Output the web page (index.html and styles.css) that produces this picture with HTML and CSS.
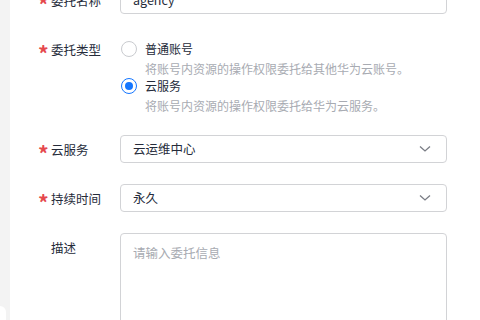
FILE: index.html
```html
<!DOCTYPE html>
<html lang="zh-CN">
<head>
    <meta charset="UTF-8">
    <meta name="viewport" content="width=device-width, initial-scale=1.0">
    <title>创建委托</title>
    <link rel="stylesheet" href="styles.css">
</head>
<body>
    <div class="page">
        <div class="card">
            <div class="form">
                <div class="form-row">
                    <div class="label"><span class="star">*</span>委托名称</div>
                    <div class="field">
                        <div class="input">agency</div>
                    </div>
                </div>
                <div class="form-row">
                    <div class="label"><span class="star">*</span>委托类型</div>
                    <div class="field radio-group">
                        <div class="option">
                            <div class="option-line"><span class="radio"></span>普通账号</div>
                            <div class="option-desc">将账号内资源的操作权限委托给其他华为云账号。</div>
                        </div>
                        <div class="option">
                            <div class="option-line"><span class="radio checked"></span>云服务</div>
                            <div class="option-desc">将账号内资源的操作权限委托给华为云服务。</div>
                        </div>
                    </div>
                </div>
                <div class="form-row">
                    <div class="label"><span class="star">*</span>云服务</div>
                    <div class="field">
                        <div class="input select">
                            <span>云运维中心</span>
                            <svg class="chevron" width="12" height="8" viewBox="0 0 12 8"><path d="M1 1.5 L6 6 L11 1.5" fill="none" stroke="#7a7d85" stroke-width="1.3"/></svg>
                        </div>
                    </div>
                </div>
                <div class="form-row">
                    <div class="label"><span class="star">*</span>持续时间</div>
                    <div class="field">
                        <div class="input select">
                            <span>永久</span>
                            <svg class="chevron" width="12" height="8" viewBox="0 0 12 8"><path d="M1 1.5 L6 6 L11 1.5" fill="none" stroke="#7a7d85" stroke-width="1.3"/></svg>
                        </div>
                    </div>
                </div>
                <div class="form-row">
                    <div class="label"><span class="star"></span>描述</div>
                    <div class="field">
                        <div class="textarea">请输入委托信息</div>
                    </div>
                </div>
            </div>
        </div>
        <div class="corner-widget"></div>
    </div>
</body>
</html>
```

FILE: styles.css
```css
html, body {
    margin: 0;
    padding: 0;
}
body {
    font-family: "Noto Sans CJK SC", "Noto Sans", sans-serif;
    color: #252b3a;
    background-color: #f3f3f3;
    overflow: hidden;
    width: 480px;
    height: 320px;
}
.page {
    position: relative;
    display: flex;
    height: 320px;
    padding-left: 10px;
}
.card {
    flex: 1;
    background-color: #ffffff;
}
.form {
    margin-top: -14px;
    display: flex;
    flex-direction: column;
    gap: 21px;
}
.form-row {
    display: flex;
    align-items: flex-start;
}
.label {
    display: flex;
    align-items: center;
    box-sizing: border-box;
    width: 110px;
    height: 28px;
    padding-left: 28px;
    font-size: 12.5px;
    white-space: nowrap;
}
.star {
    width: 13px;
    flex: none;
    color: #e5484d;
    font-size: 21px;
    font-weight: bold;
    line-height: 1;
    transform: translateY(4px);
}
.field {
    width: 327px;
}
.input {
    box-sizing: border-box;
    height: 28px;
    border: 1px solid #d2d3d6;
    border-radius: 4px;
    padding: 0 12px;
    font-size: 12.5px;
    line-height: 26px;
}
.select {
    display: flex;
    justify-content: space-between;
    align-items: center;
}
.chevron {
    margin-right: 3px;
}
.radio-group {
    padding-top: 5px;
}
.option-line {
    display: flex;
    align-items: center;
    font-size: 12px;
    line-height: 18px;
}
.radio {
    box-sizing: border-box;
    width: 16px;
    height: 16px;
    border: 1px solid #c9cbcf;
    border-radius: 50%;
    margin-left: 1px;
    margin-right: 8px;
    display: flex;
    align-items: center;
    justify-content: center;
}
.radio.checked {
    border: 1.5px solid #1476ff;
}
.radio.checked::after {
    content: "";
    width: 8px;
    height: 8px;
    border-radius: 50%;
    background-color: #1476ff;
}
.option-desc {
    padding-left: 25px;
    margin-top: 3px;
    font-size: 12px;
    line-height: 16px;
    color: #a8abb2;
}
.textarea {
    box-sizing: border-box;
    height: 110px;
    border: 1px solid #d2d3d6;
    border-radius: 4px;
    padding: 10px 12px;
    font-size: 12.5px;
    line-height: 18px;
    color: #a8abb2;
}
.corner-widget {
    position: absolute;
    left: -6px;
    top: 306px;
    width: 12px;
    height: 30px;
    border-radius: 6px;
    background-color: #ffffff;
}
```
